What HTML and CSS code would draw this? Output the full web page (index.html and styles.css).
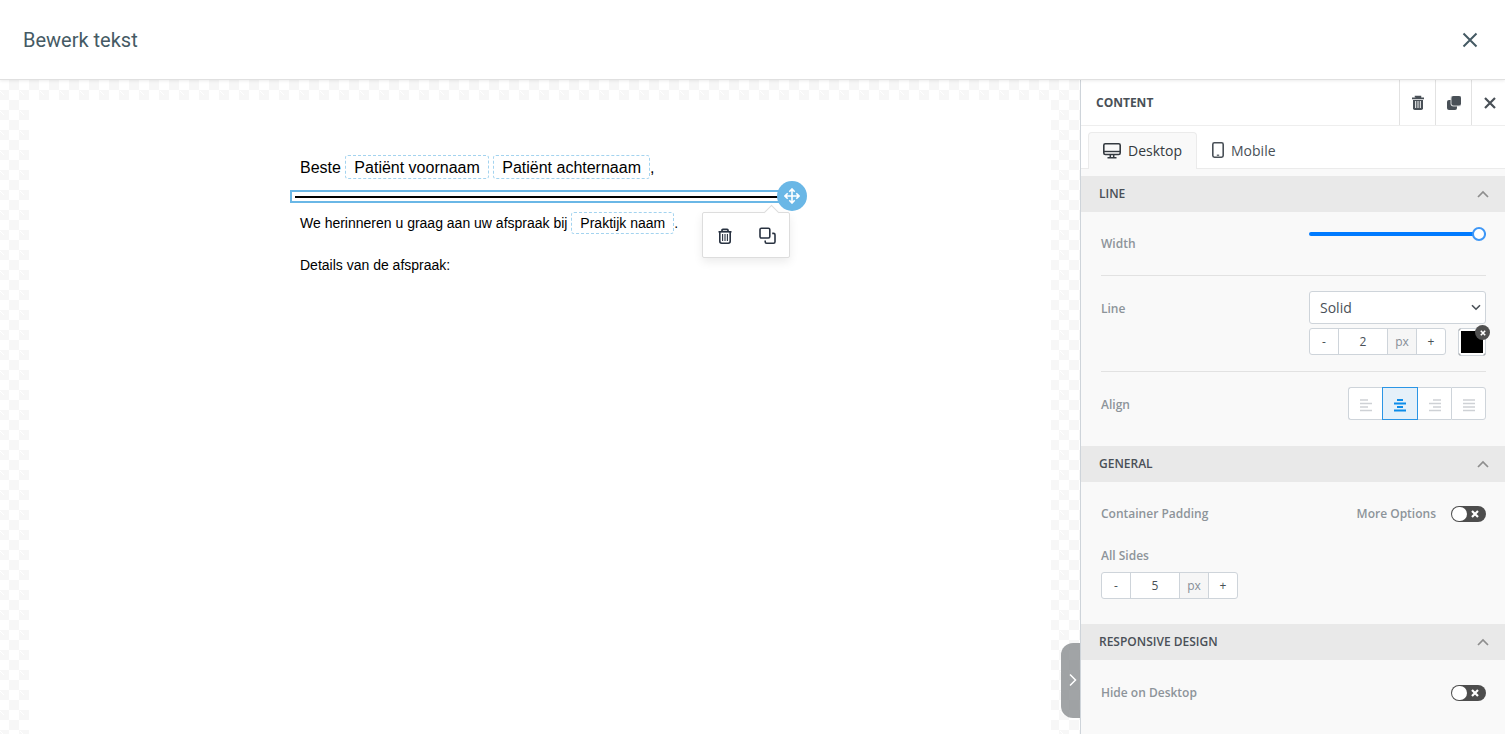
FILE: index.html
```html
<!DOCTYPE html>
<html lang="nl">
<head>
<meta charset="utf-8">
<meta name="viewport" content="width=device-width, initial-scale=1">
<title>Bewerk tekst</title>
<link rel="stylesheet" href="styles.css">
</head>
<body>
<header class="topbar">
  <h1 class="topbar-title">Bewerk tekst</h1>
  <button class="topbar-close" type="button" aria-label="Sluiten">
    <svg width="16" height="16" viewBox="0 0 16 16"><path d="M1.5 1.5l13 13M14.5 1.5l-13 13" stroke="currentColor" stroke-width="2" fill="none"/></svg>
  </button>
</header>
<div class="editor">
  <main class="canvas">
    <svg class="checker" width="100%" height="100%" aria-hidden="true">
      <defs>
        <pattern id="tiles" x="-1" y="0" width="20" height="20" patternUnits="userSpaceOnUse">
          <path d="M10 0h10v10H10zM0 10h10v10H0z" fill="#f7f7f7"/>
          <path d="M1 11l4 4" stroke="#fff" stroke-width="1"/>
        </pattern>
      </defs>
      <rect width="100%" height="100%" fill="url(#tiles)"/>
    </svg>
    <div class="paper">
      <div class="mail">
        <p class="block greeting">Beste <span class="token">Patiënt voornaam</span> <span class="token">Patiënt achternaam</span>,</p>
        <div class="divider-block">
          <hr class="divider-line">
          <button class="move" type="button" aria-label="Move">
            <svg width="16" height="16" viewBox="0 0 16 16" fill="none" stroke="currentColor" stroke-width="1.6"><path d="M8 1v14M1 8h14M5.3 3.7L8 1l2.7 2.7M5.3 12.3L8 15l2.7-2.7M3.7 5.3L1 8l2.7 2.7M12.3 5.3L15 8l-2.7 2.7"/></svg>
          </button>
          <div class="popup">
            <button class="popup-button" type="button" aria-label="Delete">
              <svg width="16" height="16" viewBox="0 0 16 16" fill="none" stroke="currentColor"><path d="M1.5 3.8h13" stroke-width="1.6"/><path d="M5 3.5V2.2Q5 1.3 5.9 1.3h4.2q.9 0 .9.9v1.3" stroke-width="1.7"/><path d="M2.8 4v9.3q0 1.9 1.9 1.9h6.6q1.9 0 1.9-1.9V4" stroke-width="1.6"/><path d="M5.6 6v7M8 6v7M10.4 6v7" stroke-width="1.1"/></svg>
            </button>
            <button class="popup-button" type="button" aria-label="Duplicate">
              <svg width="18" height="18" viewBox="0 0 18 18" fill="none" stroke="currentColor" stroke-width="1.6"><rect x="1" y="1.2" width="9.8" height="9.8" rx="1.4"/><path d="M13.2 6.400h1.400q1.400 0 1.400 1.400v7q0 1.400-1.400 1.400H7.600q-1.400 0-1.400-1.400v-1.400"/></svg>
            </button>
          </div>
        </div>
        <p class="block body-text">We herinneren u graag aan uw afspraak bij <span class="token token-small">Praktijk naam</span>.<br><br>Details van de afspraak:</p>
      </div>
    </div>
    <button class="collapse" type="button" aria-label="Collapse panel">
      <svg width="8" height="14" viewBox="0 0 8 14"><path d="M1 1.500L6.500 7 1 12.500" stroke="currentColor" stroke-width="1.500" fill="none"/></svg>
    </button>
  </main>

  <aside class="panel">
    <div class="panel-head">
      <h2 class="panel-title">CONTENT</h2>
      <button class="head-button" type="button" aria-label="Delete">
        <svg width="14" height="16" viewBox="0 0 14 16"><path d="M1 3.400h12M4.600 2.200V1.600h4.800v.8" stroke="currentColor" stroke-width="1.700" fill="none"/><path d="M2 5h10v8.200Q12 15 10.200 15H3.800Q2 15 2 13.200z" fill="currentColor"/><path d="M4.700 6v7M7 6v7M9.300 6v7" stroke="#fff" stroke-width="1"/></svg>
      </button>
      <button class="head-button" type="button" aria-label="Duplicate">
        <svg width="16" height="16" viewBox="0 0 16 16"><rect x="1" y="5" width="10" height="10" rx="2" fill="currentColor"/><rect x="5.500" y="1" width="9.500" height="9.500" rx="2" fill="currentColor" stroke="#d5d7d9" stroke-width="2" paint-order="stroke"/><path d="M5 0h11v1H5zM15 0h1v11h-1z" fill="#fff"/></svg>
      </button>
      <button class="head-button head-close" type="button" aria-label="Close">
        <svg width="12" height="12" viewBox="0 0 12 12"><path d="M1 1l10 10M11 1L1 11" stroke="currentColor" stroke-width="2.200"/></svg>
      </button>
    </div>
    <div class="tabs">
      <button class="tab tab-active" type="button">
        <svg width="18" height="17" viewBox="0 0 18 17" fill="none" stroke="currentColor"><rect x=".8" y="1.700" width="16.400" height="10.800" rx="1.500" stroke-width="1.600"/><path d="M1 9.500h16" stroke-width="1.400"/><path d="M7.300 12.500v3M10.700 12.500v3M4.500 15.800h9" stroke-width="1.500"/></svg>
        Desktop
      </button>
      <button class="tab" type="button">
        <svg width="12" height="16" viewBox="0 0 12 16" fill="none" stroke="currentColor"><rect x=".8" y=".8" width="10.400" height="14.400" rx="1.600" stroke-width="1.600"/><path d="M4.800 13.200h2.400" stroke-width="1.200"/></svg>
        Mobile
      </button>
    </div>

    <section class="section">
      <button class="section-head" type="button">LINE
        <svg width="12" height="8" viewBox="0 0 12 8"><path d="M1 7l5-5 5 5" stroke="currentColor" stroke-width="1.700" fill="none"/></svg>
      </button>
      <div class="section-body">
        <div class="row row-width">
          <label class="label" for="width">Width</label>
          <input class="slider" id="width" type="range" min="0" max="100" value="100">
        </div>
        <div class="row row-line">
          <label class="label" for="style">Line</label>
          <div class="line-controls">
            <div class="select-wrap">
              <select class="select" id="style"><option>Solid</option><option>Dashed</option><option>Dotted</option></select>
              <svg class="select-arrow" width="10" height="7" viewBox="0 0 10 7"><path d="M1 1.200l4 4 4-4" stroke="currentColor" stroke-width="1.600" fill="none"/></svg>
            </div>
            <div class="line-size">
              <div class="stepper">
                <button class="step" type="button">-</button>
                <input class="step-value" type="text" value="2" aria-label="Line size">
                <span class="unit">px</span>
                <button class="step" type="button">+</button>
              </div>
              <div class="swatch-wrap">
                <button class="swatch" type="button" aria-label="Line color"></button>
                <button class="swatch-clear" type="button" aria-label="Clear color">
                  <svg width="6" height="6" viewBox="0 0 6 6"><path d="M.8.8l4.400 4.400M5.200.8L.8 5.200" stroke="currentColor" stroke-width="1.600"/></svg>
                </button>
              </div>
            </div>
          </div>
        </div>
        <div class="row row-align">
          <span class="label">Align</span>
          <div class="align-group" role="group" aria-label="Align">
            <button class="align" type="button" aria-label="Left"><svg width="12" height="14" viewBox="0 0 12 14"><path d="M0 2h8M0 5.500h12M0 9h8M0 12.500h12" stroke="currentColor" stroke-width="1.700"/></svg></button>
            <button class="align align-active" type="button" aria-label="Center"><svg width="12" height="14" viewBox="0 0 12 14"><path d="M3 2h6M0 5.500h12M3 9h6M0 12.500h12" stroke="currentColor" stroke-width="1.800"/></svg></button>
            <button class="align" type="button" aria-label="Right"><svg width="12" height="14" viewBox="0 0 12 14"><path d="M4 2h8M0 5.500h12M4 9h8M0 12.500h12" stroke="currentColor" stroke-width="1.700"/></svg></button>
            <button class="align" type="button" aria-label="Justify"><svg width="12" height="14" viewBox="0 0 12 14"><path d="M0 2h12M0 5.500h12M0 9h12M0 12.500h12" stroke="currentColor" stroke-width="1.700"/></svg></button>
          </div>
        </div>
      </div>
    </section>

    <section class="section">
      <button class="section-head" type="button">GENERAL
        <svg width="12" height="8" viewBox="0 0 12 8"><path d="M1 7l5-5 5 5" stroke="currentColor" stroke-width="1.700" fill="none"/></svg>
      </button>
      <div class="section-body section-padded">
        <div class="option-row">
          <span class="label">Container Padding</span>
          <label class="label more" for="more">More Options</label>
          <span class="toggle">
            <input class="toggle-input" id="more" type="checkbox">
            <svg class="toggle-x" width="8" height="8" viewBox="0 0 8 8"><path d="M1 1l6 6M7 1L1 7" stroke="currentColor" stroke-width="2.200"/></svg>
          </span>
        </div>
        <div class="padding-field">
          <label class="label" for="sides">All Sides</label>
          <div class="stepper">
            <button class="step" type="button">-</button>
            <input class="step-value" id="sides" type="text" value="5">
            <span class="unit">px</span>
            <button class="step" type="button">+</button>
          </div>
        </div>
      </div>
    </section>

    <section class="section">
      <button class="section-head" type="button">RESPONSIVE DESIGN
        <svg width="12" height="8" viewBox="0 0 12 8"><path d="M1 7l5-5 5 5" stroke="currentColor" stroke-width="1.700" fill="none"/></svg>
      </button>
      <div class="section-body section-padded">
        <div class="option-row">
          <label class="label" for="hide">Hide on Desktop</label>
          <span class="toggle toggle-end">
            <input class="toggle-input" id="hide" type="checkbox">
            <svg class="toggle-x" width="8" height="8" viewBox="0 0 8 8"><path d="M1 1l6 6M7 1L1 7" stroke="currentColor" stroke-width="2.200"/></svg>
          </span>
        </div>
      </div>
    </section>
  </aside>
</div>
</body>
</html>
```

FILE: styles.css
```css
* { box-sizing: border-box; }

body {
  margin: 0;
  height: 100vh;
  overflow: hidden;
  display: flex;
  flex-direction: column;
  background: #fff;
  font-family: "Open Sans", sans-serif;
  color: #495057;
}

button, input, select {
  margin: 0;
  padding: 0;
  border: 0;
  background: none;
  font: inherit;
  color: inherit;
}

button { cursor: pointer; }
svg { display: block; flex: none; }

.topbar {
  flex: none;
  display: flex;
  align-items: center;
  justify-content: space-between;
  height: 80px;
  padding: 0 27px 0 23px;
  border-bottom: 1px solid #e0e0e0;
  box-shadow: 0 1px 3px rgba(0, 0, 0, 0.08);
  background: #fff;
  position: relative;
  z-index: 2;
  color: #455a64;
}

.topbar-title {
  margin: 0;
  font: 400 20px/28px Roboto, sans-serif;
}

.editor {
  flex: 1;
  display: flex;
  min-height: 0;
}

.canvas {
  flex: 1;
  display: flex;
  position: relative;
  padding: 20px 29px 0;
}

.checker {
  position: absolute;
  inset: 0;
}

.paper {
  flex: 1;
  position: relative;
  padding-top: 45px;
  background: #fff;
}

.mail {
  width: 500px;
  max-width: 100%;
  margin: 0 auto;
  font-family: "Liberation Sans", Arial, sans-serif;
  color: #000;
}

.block { margin: 0; padding: 10px; }

.greeting {
  padding-top: 11px;
  font-size: 16px;
  line-height: 24px;
}

.body-text {
  font-size: 14px;
  line-height: 21px;
}

.token {
  padding: 3px 8px 2px;
  border: 1px dashed #a3d3ef;
  border-radius: 3px;
}

.token-small { padding: 2px 8px; }

.divider-block {
  position: relative;
  padding: 4px 3px 3px;
  border: 2px solid #6ab7e6;
}

.divider-line {
  margin: 0;
  border: 0;
  border-top: 2px solid #000;
}

.move {
  position: absolute;
  top: -11px;
  right: -19px;
  width: 30px;
  height: 30px;
  display: flex;
  align-items: center;
  justify-content: center;
  border-radius: 50%;
  background: #6ab7e6;
  color: #fff;
}

.popup {
  position: absolute;
  top: 20px;
  right: -2px;
  width: 88px;
  height: 46px;
  display: flex;
  border: 1px solid #ddd;
  border-radius: 2px;
  background: #fff;
  box-shadow: 0 4px 10px rgba(0, 0, 0, 0.08);
  color: #293241;
}

.popup::before {
  content: "";
  position: absolute;
  top: -6px;
  right: 12px;
  width: 10px;
  height: 10px;
  border: 1px solid #ddd;
  border-width: 1px 0 0 1px;
  background: #fff;
  transform: rotate(45deg);
}

.popup-button {
  flex: 1;
  display: flex;
  align-items: center;
  justify-content: center;
  padding-top: 2px;
}

.collapse {
  position: absolute;
  right: 0;
  bottom: 16px;
  width: 19px;
  height: 75px;
  display: flex;
  align-items: center;
  justify-content: flex-end;
  padding: 0 3px 2px 0;
  border-radius: 12px 0 0 12px;
  background: rgba(134, 138, 141, 0.78);
  color: #fff;
}

.panel {
  flex: none;
  width: 425px;
  border-left: 1px solid #ced4da;
  background: #f9f9f9;
}

.panel-head {
  display: flex;
  align-items: stretch;
  height: 46px;
  border-bottom: 1px solid #eee;
  background: #fff;
}

.panel-title {
  flex: 1;
  margin: 0;
  padding-left: 15px;
  font-size: 12px;
  line-height: 45px;
  font-weight: 700;
}

.head-button {
  width: 36px;
  display: flex;
  align-items: center;
  justify-content: center;
  border-left: 1px solid #e2e2e2;
}

.head-close { width: 34px; padding-left: 3px; }

.tabs {
  display: flex;
  height: 43px;
  padding: 6px 7px 0;
  border-bottom: 1px solid #ebebeb;
  background: #fff;
}

.tab {
  display: flex;
  align-items: center;
  gap: 7px;
  height: 37px;
  padding: 0 14px 2px;
  border: 1px solid transparent;
  border-bottom: 0;
  font-size: 14px;
}

.tab-active {
  border-color: #ebebeb;
  border-radius: 4px 4px 0 0;
  background: #f9f9f9;
  color: #343a40;
}

.section:first-of-type { padding-top: 7px; }

.section-head {
  width: 100%;
  height: 36px;
  display: flex;
  align-items: center;
  justify-content: space-between;
  padding: 0 16px 1px 18px;
  background: #e9e9e9;
  font-size: 12px;
  font-weight: 600;
}

.section-head svg { color: #8e8e8e; }

.section-body { padding: 0 19px 0 20px; }

.section-padded { padding-top: 24px; padding-bottom: 25px; }
.section:last-of-type .section-padded { padding-top: 25px; }

.label {
  font-size: 12px;
  line-height: 16px;
  font-weight: 600;
  color: #8d949a;
}

.row {
  display: flex;
  justify-content: space-between;
  border-bottom: 1px solid #e2e2e2;
}

.row-width { align-items: flex-start; height: 64px; padding-top: 15px; }
.row-width .label { padding-top: 9px; }
.row-line { padding: 15px 0; }
.row-line .label { padding-top: 10px; }
.row-align { padding: 15px 0 26px; border-bottom: 0; }
.row-align .label { padding-top: 10px; }

.slider {
  width: 177px;
  height: 14px;
  appearance: none;
}

.slider::-webkit-slider-runnable-track {
  height: 4px;
  border-radius: 2px;
  background: #007bff;
}

.slider::-webkit-slider-thumb {
  appearance: none;
  width: 14px;
  height: 14px;
  margin-top: -5px;
  border: 2px solid #3f97f6;
  border-radius: 50%;
  background: #fff;
}

.line-controls {
  width: 177px;
  display: flex;
  flex-direction: column;
  gap: 4px;
}

.select-wrap { position: relative; }

.select {
  width: 100%;
  height: 33px;
  display: block;
  padding: 0 10px;
  appearance: none;
  border: 1px solid #ced4da;
  border-radius: 3px;
  background: #fff;
  font-size: 14px;
}

.select-arrow {
  position: absolute;
  top: 13px;
  right: 5px;
  pointer-events: none;
}

.line-size {
  display: flex;
  justify-content: space-between;
}

.stepper {
  width: 137px;
  height: 27px;
  display: flex;
  border: 1px solid #ced4da;
  border-radius: 3px;
  background: #fff;
  font-size: 12px;
}

.step { width: 28px; }

.step-value {
  width: 50px;
  border: 1px solid #ced4da;
  border-width: 0 1px;
  text-align: center;
}

.unit {
  width: 29px;
  border-right: 1px solid #ced4da;
  background: #f6f6f6;
  line-height: 26px;
  text-align: center;
  color: #868e96;
}

.swatch-wrap { position: relative; }

.swatch {
  display: block;
  width: 28px;
  height: 28px;
  border: 1px solid #ced4da;
  border-radius: 3px;
  background: #000;
  box-shadow: inset 0 0 0 2px #fff;
}

.swatch-clear {
  position: absolute;
  top: -3px;
  right: -4px;
  width: 15px;
  height: 15px;
  display: flex;
  align-items: center;
  justify-content: center;
  border-radius: 50%;
  background: #505050;
  color: #fff;
}

.align-group {
  display: flex;
  height: 33px;
}

.align {
  width: 34px;
  display: flex;
  align-items: center;
  justify-content: center;
  padding-top: 2px;
  border: 1px solid #ced4da;
  border-right: 0;
  background: #fff;
  color: #ced1d5;
}

.align:first-child { border-radius: 3px 0 0 3px; }
.align:last-child { border-radius: 0 3px 3px 0; border-right: 1px solid #ced4da; width: 35px; }

.align-active {
  width: 36px;
  border: 1px solid #2b95e5;
  background: #e5f0f9;
  color: #0c8ce9;
}

.align-active + .align { border-left: 0; width: 33px; }

.option-row {
  display: flex;
  align-items: center;
}

.more { margin-left: auto; margin-right: 15px; }

.toggle {
  position: relative;
  width: 35px;
  height: 16px;
}

.toggle-end { margin-left: auto; }

.toggle-input {
  display: block;
  width: 35px;
  height: 16px;
  padding: 1px;
  appearance: none;
  border-radius: 8px;
  background: #4d4d4d;
}

.toggle-input::before {
  content: "";
  display: block;
  width: 15px;
  height: 14px;
  border-radius: 7px;
  background: #fff;
}

.toggle-x {
  position: absolute;
  top: 4px;
  right: 7px;
  color: #fff;
  pointer-events: none;
}

.padding-field {
  display: flex;
  flex-direction: column;
  gap: 8px;
  padding-top: 26px;
}
```
